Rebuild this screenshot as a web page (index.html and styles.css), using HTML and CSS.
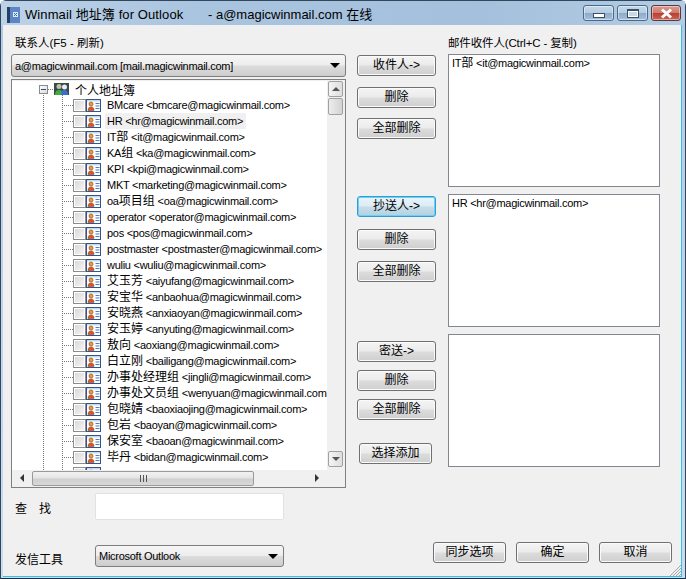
FILE: index.html
```html
<!DOCTYPE html>
<html lang="zh-CN">
<head>
<meta charset="utf-8">
<title>Winmail 地址簿 for Outlook</title>
<link rel="stylesheet" href="styles.css">
</head>
<body>
<svg class="defs" width="0" height="0" aria-hidden="true">
  <symbol id="card" viewBox="0 0 15 13">
    <rect x="0.5" y="0.5" width="14" height="12" fill="#fff" stroke="#34558c"/>
    <rect x="1" y="1" width="13" height="1.500" fill="#c9d8ee"/>
    <circle cx="5" cy="5" r="2" fill="#e8a040" stroke="#8a4a12" stroke-width=".7"/>
    <path d="M2 11.500c0-3 1.300-3.600 3-3.600s3 .6 3 3.600z" fill="#d9531e" stroke="#8a3210" stroke-width=".5"/>
    <path d="M9.500 4.500h4M9.500 7h4M9.500 9.500h4" stroke="#4a7cd0" stroke-width="1.100"/>
  </symbol>
</svg>
<div class="window">
  <header class="titlebar">
    <svg class="app-icon" width="13" height="16" viewBox="0 0 13 16">
      <rect x="0" y="0" width="3" height="16" fill="#26405f"/>
      <rect x="3" y="0" width="10" height="16" fill="#5c86c8"/>
      <rect x="6" y="5" width="5" height="5" fill="#dfe9f7"/>
      <path d="M7 6l3 3M10 6l-3 3" stroke="#3a66ad" stroke-width="1"/>
    </svg>
    <span class="title-a">Winmail 地址簿 for Outlook</span>
    <span class="title-b">- a@magicwinmail.com 在线</span>
    <div class="caption">
      <div class="cap cap-min"><i class="glyph-min"></i></div>
      <div class="cap cap-max"><i class="glyph-max"></i></div>
      <div class="cap cap-close">
        <svg width="15" height="11" viewBox="0 0 15 11"><path d="M3 1.500l9 8M12 1.500l-9 8" stroke="#fff" stroke-width="3"/></svg>
      </div>
    </div>
  </header>
  <div class="client">
    <section class="left">
      <div class="label">联系人(F5 - 刷新)</div>
      <div class="combo combo-wide"><span>a@magicwinmail.com [mail.magicwinmail.com]</span><i class="caret"></i></div>
      <div class="tree">
        <div class="tree-top">
          <div class="tree-view">
            <div class="row row-root">
              <i class="expander"></i><i class="hdots"></i>
              <svg class="group-icon" width="15" height="14" viewBox="0 0 15 14">
                <rect x="0" y="1" width="15" height="12" fill="#3d4a44"/>
                <circle cx="5" cy="4.500" r="2.500" fill="#b5c7b0"/>
                <path d="M1 13c0-4 2-5 4-5s4 1 4 5z" fill="#3fae3f"/>
                <circle cx="10.500" cy="5" r="2.500" fill="#e6edf6"/>
                <path d="M7 13c0-4 1.500-5 3.500-5s3.500 1 3.500 5z" fill="#3a6fd0"/>
              </svg>
              <span class="root-text">个人地址簿</span>
            </div>
            <div class="row"><i class="dash"></i><i class="check"></i><svg class="card"><use href="#card"/></svg><span class="name">BMcare &lt;bmcare@magicwinmail.com&gt;</span></div>
            <div class="row"><i class="dash"></i><i class="check"></i><svg class="card"><use href="#card"/></svg><span class="name name-hover">HR &lt;hr@magicwinmail.com&gt;</span></div>
            <div class="row"><i class="dash"></i><i class="check"></i><svg class="card"><use href="#card"/></svg><span class="name">IT<b class="zh">部</b> &lt;it@magicwinmail.com&gt;</span></div>
            <div class="row"><i class="dash"></i><i class="check"></i><svg class="card"><use href="#card"/></svg><span class="name">KA<b class="zh">组</b> &lt;ka@magicwinmail.com&gt;</span></div>
            <div class="row"><i class="dash"></i><i class="check"></i><svg class="card"><use href="#card"/></svg><span class="name">KPI &lt;kpi@magicwinmail.com&gt;</span></div>
            <div class="row"><i class="dash"></i><i class="check"></i><svg class="card"><use href="#card"/></svg><span class="name">MKT &lt;marketing@magicwinmail.com&gt;</span></div>
            <div class="row"><i class="dash"></i><i class="check"></i><svg class="card"><use href="#card"/></svg><span class="name">oa<b class="zh">项目组</b> &lt;oa@magicwinmail.com&gt;</span></div>
            <div class="row"><i class="dash"></i><i class="check"></i><svg class="card"><use href="#card"/></svg><span class="name">operator &lt;operator@magicwinmail.com&gt;</span></div>
            <div class="row"><i class="dash"></i><i class="check"></i><svg class="card"><use href="#card"/></svg><span class="name">pos &lt;pos@magicwinmail.com&gt;</span></div>
            <div class="row"><i class="dash"></i><i class="check"></i><svg class="card"><use href="#card"/></svg><span class="name">postmaster &lt;postmaster@magicwinmail.com&gt;</span></div>
            <div class="row"><i class="dash"></i><i class="check"></i><svg class="card"><use href="#card"/></svg><span class="name">wuliu &lt;wuliu@magicwinmail.com&gt;</span></div>
            <div class="row"><i class="dash"></i><i class="check"></i><svg class="card"><use href="#card"/></svg><span class="name"><b class="zh">艾玉芳</b> &lt;aiyufang@magicwinmail.com&gt;</span></div>
            <div class="row"><i class="dash"></i><i class="check"></i><svg class="card"><use href="#card"/></svg><span class="name"><b class="zh">安宝华</b> &lt;anbaohua@magicwinmail.com&gt;</span></div>
            <div class="row"><i class="dash"></i><i class="check"></i><svg class="card"><use href="#card"/></svg><span class="name"><b class="zh">安晓燕</b> &lt;anxiaoyan@magicwinmail.com&gt;</span></div>
            <div class="row"><i class="dash"></i><i class="check"></i><svg class="card"><use href="#card"/></svg><span class="name"><b class="zh">安玉婷</b> &lt;anyuting@magicwinmail.com&gt;</span></div>
            <div class="row"><i class="dash"></i><i class="check"></i><svg class="card"><use href="#card"/></svg><span class="name"><b class="zh">敖向</b> &lt;aoxiang@magicwinmail.com&gt;</span></div>
            <div class="row"><i class="dash"></i><i class="check"></i><svg class="card"><use href="#card"/></svg><span class="name"><b class="zh">白立刚</b> &lt;bailigang@magicwinmail.com&gt;</span></div>
            <div class="row"><i class="dash"></i><i class="check"></i><svg class="card"><use href="#card"/></svg><span class="name"><b class="zh">办事处经理组</b> &lt;jingli@magicwinmail.com&gt;</span></div>
            <div class="row"><i class="dash"></i><i class="check"></i><svg class="card"><use href="#card"/></svg><span class="name"><b class="zh">办事处文员组</b> &lt;wenyuan@magicwinmail.com&gt;</span></div>
            <div class="row"><i class="dash"></i><i class="check"></i><svg class="card"><use href="#card"/></svg><span class="name"><b class="zh">包晓婧</b> &lt;baoxiaojing@magicwinmail.com&gt;</span></div>
            <div class="row"><i class="dash"></i><i class="check"></i><svg class="card"><use href="#card"/></svg><span class="name"><b class="zh">包岩</b> &lt;baoyan@magicwinmail.com&gt;</span></div>
            <div class="row"><i class="dash"></i><i class="check"></i><svg class="card"><use href="#card"/></svg><span class="name"><b class="zh">保安室</b> &lt;baoan@magicwinmail.com&gt;</span></div>
            <div class="row"><i class="dash"></i><i class="check"></i><svg class="card"><use href="#card"/></svg><span class="name"><b class="zh">毕丹</b> &lt;bidan@magicwinmail.com&gt;</span></div>
            <div class="row"><i class="dash"></i><i class="check"></i><svg class="card"><use href="#card"/></svg></div>
          </div>
          <div class="vscroll">
            <div class="sb-btn"><i class="tri-up"></i></div>
            <div class="sb-thumb-v"></div>
            <div class="sb-track"></div>
            <div class="sb-btn"><i class="tri-down"></i></div>
          </div>
        </div>
        <div class="hscroll">
          <div class="sb-h-end"><i class="tri-left"></i></div>
          <div class="sb-thumb-h"><i class="grip"></i></div>
          <div class="sb-track"></div>
          <div class="sb-h-end"><i class="tri-right"></i></div>
        </div>
      </div>
      <div class="find-row">
        <span class="field-label field-spaced">查&nbsp;找</span>
        <div class="find-input"></div>
      </div>
      <div class="tool-row">
        <span class="field-label">发信工具</span>
        <div class="combo combo-tool"><span>Microsoft Outlook</span><i class="caret"></i></div>
      </div>
    </section>
    <section class="right-area">
      <div class="columns">
        <div class="mid">
          <div class="btn-group group-to">
            <button class="btn">收件人-&gt;</button>
            <button class="btn">删除</button>
            <button class="btn">全部删除</button>
          </div>
          <div class="btn-group group-cc">
            <button class="btn btn-focus">抄送人-&gt;</button>
            <button class="btn">删除</button>
            <button class="btn">全部删除</button>
          </div>
          <div class="btn-group group-bcc">
            <button class="btn">密送-&gt;</button>
            <button class="btn">删除</button>
            <button class="btn">全部删除</button>
          </div>
          <button class="btn btn-add">选择添加</button>
        </div>
        <div class="recipients">
          <div class="label">邮件收件人(Ctrl+C - 复制)</div>
          <div class="listbox">IT<b class="zh">部</b> &lt;it@magicwinmail.com&gt;</div>
          <div class="listbox">HR &lt;hr@magicwinmail.com&gt;</div>
          <div class="listbox"></div>
        </div>
      </div>
      <footer class="actions">
        <button class="btn btn-foot">同步选项</button>
        <button class="btn btn-foot">确定</button>
        <button class="btn btn-foot">取消</button>
      </footer>
      <svg class="grip-corner" width="12" height="12" viewBox="0 0 12 12"><path d="M12 1L1 12M12 4L4 12M12 7L7 12M12 10L10 12" stroke="#a8a8a8" stroke-width="1"/></svg>
    </section>
  </div>
</div>
</body>
</html>
```
FILE: styles.css
```css
* { box-sizing: border-box; }
html, body { margin: 0; padding: 0; }
body {
  width: 686px;
  height: 579px;
  overflow: hidden;
  background: #fff;
  font-family: "Liberation Sans", "Noto Sans CJK SC", sans-serif;
  font-size: 11px;
  color: #000;
}
.defs { position: absolute; }
.zh { font-size: 12px; font-weight: 400; letter-spacing: 0; }
.window {
  width: 686px;
  height: 579px;
  display: flex;
  flex-direction: column;
  background: linear-gradient(180deg, #a9c5e0 0, #b3cde6 40px, #c8def0 100%);
  border: 1px solid #33475c;
  border-bottom-color: #1d2f3f;
  border-radius: 6px 6px 0 0;
}
.titlebar {
  height: 24px;
  flex: none;
  display: flex;
  align-items: center;
  padding-left: 6px;
  font-size: 13px;
  position: relative;
  background: linear-gradient(90deg, #bcd2e7 0, #a9c4df 30%, #a4c0dc 70%, #b4cce3 100%);
}
.app-icon { margin-right: 5px; margin-top: 4px; }
.title-a { width: 183px; white-space: nowrap; letter-spacing: .1px; }
.title-b { white-space: nowrap; }
.caption {
  margin-left: auto;
  margin-right: 4px;
  display: flex;
  gap: 3px;
  align-self: flex-start;
}
.cap {
  height: 16px;
  margin-top: 4px;
  border: 1px solid #4a6a8a;
  border-radius: 3px;
  display: flex;
  align-items: center;
  justify-content: center;
  box-shadow: inset 0 0 0 1px rgba(255,255,255,.45);
}
.cap-min, .cap-max {
  width: 31px;
  background: linear-gradient(180deg, #c4d8ea 0, #b4cce3 48%, #8daac8 52%, #a4c2de 100%);
}
.cap-close {
  width: 30px;
  background: linear-gradient(180deg, #dd9a90 0, #cf7a6e 48%, #b83f32 52%, #c86558 100%);
  border-color: #5a3a3a;
}
.glyph-min { width: 12px; height: 5px; background: #fff; border: 1px solid #3d4f62; margin-top: 5px; }
.glyph-max { width: 12px; height: 9px; border: 1px solid #3d4f62; border-top-width: 2px; background: #c8d8e8; box-shadow: inset 0 0 0 1px #fff; }

.client {
  flex: 1;
  margin: 0 3px 1px 2px;
  background: #f0f0f0;
  border-bottom: 1px solid #35c0e8;
  border-right: 1px solid #35c0e8;
  display: flex;
  min-height: 0;
  padding-left: 8px;
}
.left { width: 335px; flex: none; display: flex; flex-direction: column; }
.label {
  font-size: 11.500px;
  height: 29px;
  padding: 11px 0 0 4px;
  line-height: 14px;
  white-space: nowrap;
}
.combo {
  display: flex;
  align-items: center;
  justify-content: space-between;
  border: 1px solid #7d7d7d;
  border-radius: 3px;
  background: linear-gradient(180deg, #f6f6f6 0, #ededed 48%, #dcdcdc 52%, #cdcdcd 100%);
  white-space: nowrap;
  padding: 0 5px 0 3px;
  letter-spacing: -.27px;
}
.combo-wide { height: 23px; }
.caret {
  width: 0;
  height: 0;
  border-left: 5px solid transparent;
  border-right: 5px solid transparent;
  border-top: 5px solid #000;
}
.tree {
  margin-top: 2px;
  height: 409px;
  border: 1px solid #7f7f7f;
  background: #f0f0f0;
  display: flex;
  flex-direction: column;
  flex: none;
}
.tree-top { flex: 1; min-height: 0; display: flex; padding: 1px 2px 0 0; }
.tree-view {
  flex: 1;
  min-width: 0;
  overflow: hidden;
  background-color: #fff;
  background-image:
    repeating-linear-gradient(180deg, #777 0 1px, transparent 1px 2px),
    repeating-linear-gradient(180deg, #777 0 1px, transparent 1px 2px);
  background-size: 1px 100%, 1px 100%;
  background-position: 31px 12px, 50px 12px;
  background-repeat: no-repeat;
}
.row {
  height: 16px;
  display: flex;
  align-items: center;
  white-space: nowrap;
}
.row-root { padding-left: 27px; }
.expander {
  width: 9px;
  height: 9px;
  border: 1px solid #8a8a8a;
  background: linear-gradient(135deg, #fff, #dcdcdc);
  position: relative;
  flex: none;
}
.expander::after {
  content: "";
  position: absolute;
  left: 1px;
  top: 3px;
  width: 5px;
  height: 1px;
  background: #2a4a8a;
}
.hdots {
  width: 6px;
  height: 1px;
  background: repeating-linear-gradient(90deg, #777 0 1px, transparent 1px 2px);
  flex: none;
}
.group-icon { flex: none; margin-right: 6px; }
.root-text { font-size: 12px; }
.dash {
  width: 11px;
  height: 1px;
  margin-left: 50px;
  background: repeating-linear-gradient(90deg, #777 0 1px, transparent 1px 2px);
  flex: none;
}
.check {
  width: 13px;
  height: 13px;
  flex: none;
  border: 1px solid #8d8d8d;
  background: linear-gradient(135deg, #d8d8d8, #f5f5f5);
  box-shadow: inset 0 0 0 1px #fff;
}
.card { width: 15px; height: 13px; flex: none; }
.name { margin-left: 4px; padding: 0 3px 0 2px; line-height: 16px; letter-spacing: -.27px; }
.name-hover { background: #f0f0f0; }
.vscroll {
  width: 16px;
  flex: none;
  display: flex;
  flex-direction: column;
  padding: 0 0 3px 1px;
  gap: 1px;
}
.sb-btn {
  height: 16px;
  border: 1px solid #a0a0a0;
  border-radius: 2px;
  background: linear-gradient(90deg, #f4f4f4, #dedede);
  display: flex;
  align-items: center;
  justify-content: center;
  flex: none;
}
.sb-thumb-v {
  height: 17px;
  border: 1px solid #a0a0a0;
  border-radius: 2px;
  background: linear-gradient(90deg, #ececec, #d4d4d4);
  flex: none;
}
.sb-track { flex: 1; background: #f0f0f0; }
.tri-up { width: 0; height: 0; border: 4px solid transparent; border-top: 0; border-bottom: 4px solid #555; }
.tri-down { width: 0; height: 0; border: 4px solid transparent; border-bottom: 0; border-top: 4px solid #555; }
.hscroll {
  height: 17px;
  flex: none;
  display: flex;
  align-items: center;
  padding: 0 18px 1px 0;
}
.sb-h-end { width: 20px; height: 15px; display: flex; align-items: center; justify-content: center; flex: none; }
.tri-left { width: 0; height: 0; border: 4px solid transparent; border-left: 0; border-right: 4px solid #333; }
.tri-right { width: 0; height: 0; border: 4px solid transparent; border-right: 0; border-left: 4px solid #333; }
.sb-thumb-h {
  width: 222px;
  height: 15px;
  border: 1px solid #9a9a9a;
  border-radius: 2px;
  background: linear-gradient(180deg, #f2f2f2 0, #e4e4e4 48%, #cfcfcf 52%, #d8d8d8 100%);
  display: flex;
  align-items: center;
  justify-content: center;
  flex: none;
}
.grip { width: 7px; height: 7px; background: repeating-linear-gradient(90deg, #555 0 1px, transparent 1px 3px); }
.find-row { display: flex; align-items: center; margin-top: 5px; height: 27px; }
.field-label { width: 84px; padding-left: 4px; font-size: 12px; flex: none; }
.field-spaced { letter-spacing: 4.300px; padding-top: 1px; }
.find-input {
  width: 189px;
  height: 27px;
  background: #fff;
  border: 1px solid #e2e2e2;
  border-radius: 2px;
}
.tool-row { display: flex; align-items: center; margin-top: 25px; height: 22px; }
.tool-row .field-label { padding-top: 5px; }
.combo-tool { width: 189px; height: 22px; padding-right: 5px; }
.right-area {
  flex: 1;
  min-width: 0;
  display: flex;
  flex-direction: column;
  position: relative;
}
.columns { display: flex; padding-left: 11px; }
.mid { width: 79px; flex: none; margin-right: 12px; display: flex; flex-direction: column; align-items: flex-start; }
.btn-group { display: flex; flex-direction: column; }
.group-to { margin-top: 30px; gap: 10.500px; }
.group-cc { margin-top: 57px; gap: 11.500px; }
.group-bcc { margin-top: 59px; gap: 8px; }
.btn {
  width: 79px;
  height: 21px;
  padding: 0;
  font-family: "Liberation Sans", "Noto Sans CJK SC", sans-serif;
  font-size: 12px;
  line-height: 19px;
  color: #000;
  border: 1px solid #707070;
  border-radius: 3px;
  background: linear-gradient(180deg, #f4f4f4 0, #ebebeb 48%, #dcdcdc 52%, #cfcfcf 100%);
  box-shadow: inset 0 0 0 1px #fafafa;
}
.btn-focus {
  border-color: #2a9fd6;
  background: linear-gradient(180deg, #e8f4fb 0, #dcecf5 48%, #c6dde9 52%, #b7d0de 100%);
  box-shadow: inset 0 0 0 1px #6fd0f4;
}
.btn-add { width: 73px; margin-top: 23px; margin-left: 2px; }
.recipients { width: 212px; flex: none; }
.recipients .label { padding-left: 0; letter-spacing: -.15px; }
.listbox {
  height: 133px;
  margin-bottom: 7px;
  background: #fff;
  border: 1px solid #828790;
  padding: 1px 3px;
  line-height: 15px;
  letter-spacing: -.27px;
}
.actions {
  margin-top: auto;
  display: flex;
  gap: 10px;
  justify-content: flex-end;
  padding: 0 9px 13px 0;
}
.btn-foot { width: 73px; }
.grip-corner { position: absolute; right: 0; bottom: 0; }
```
